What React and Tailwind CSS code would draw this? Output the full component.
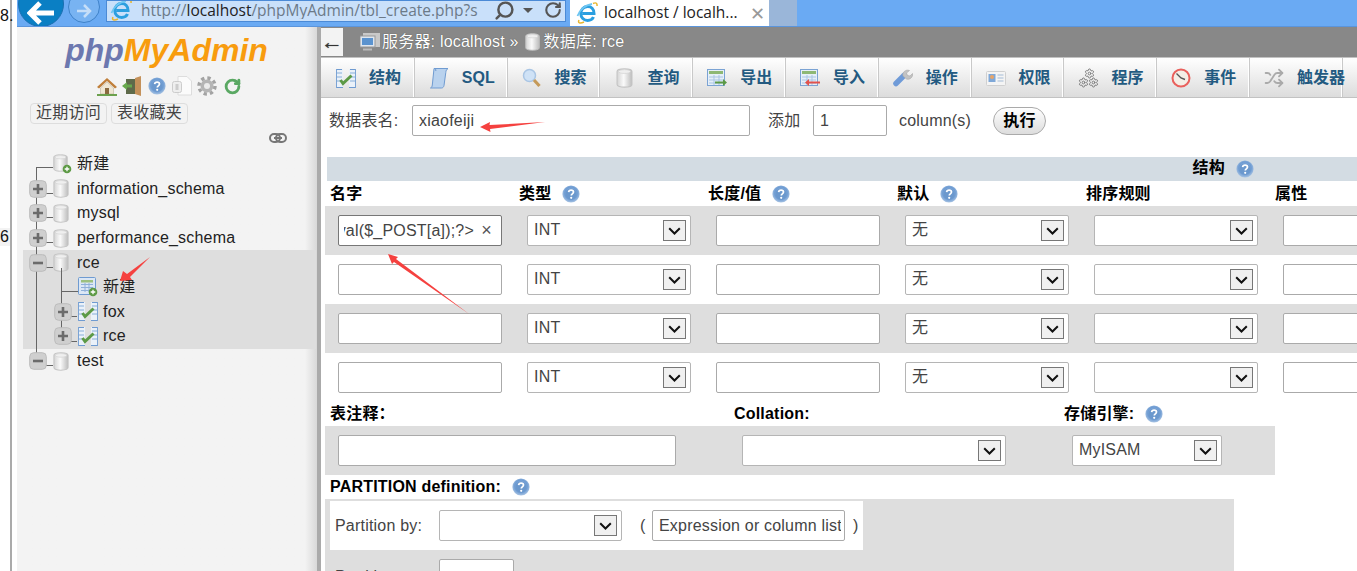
import React from "react";
import { Settings, Shuffle, Search, RotateCw } from "lucide-react";

const Help = ({ className = "" }) => (
  <svg width="18" height="18" viewBox="0 0 18 18" className={"shrink-0 " + className}>
    <defs>
      <radialGradient id="hg" cx="50%" cy="45%" r="60%">
        <stop offset="0%" stopColor="#a9c6e8" />
        <stop offset="60%" stopColor="#6d9bd2" />
        <stop offset="100%" stopColor="#b9cfe8" />
      </radialGradient>
    </defs>
    <circle cx="9" cy="9" r="8.6" fill="url(#hg)" />
    <circle cx="9" cy="9" r="5.5" fill="#6b98cd" />
    <path d="M6.6 7.2c.2-1.5 1.3-2.1 2.5-2.1 1.4 0 2.4.8 2.4 2 0 1.800-2.200 1.800-2.200 3.400" fill="none" stroke="#fff" strokeWidth="1.700" />
    <circle cx="9.200" cy="12.800" r="1.100" fill="#fff" />
  </svg>
);

const Db = ({ w = 16, h = 19 }) => (
  <svg width={w} height={h} viewBox="0 0 15 18" className="shrink-0">
    <defs>
      <linearGradient id="dbg" x1="0" x2="1" y1="0" y2="0">
        <stop offset="0%" stopColor="#d4d4d4" />
        <stop offset="45%" stopColor="#fafafa" />
        <stop offset="100%" stopColor="#bdbdbd" />
      </linearGradient>
    </defs>
    <path d="M.8 3.200C.8 1.600 3.800.8 7.500.8s6.700.8 6.700 2.400v11.600c0 1.600-3 2.400-6.700 2.400S.8 16.400.8 14.800z" fill="url(#dbg)" stroke="#c4c4c4" />
    <ellipse cx="7.500" cy="3.200" rx="5.500" ry="1.700" fill="#efefef" stroke="#d0d0d0" strokeWidth=".6" />
  </svg>
);

const GreenPlus = ({ x, y }) => (
  <g>
    <circle cx={x} cy={y} r="4.300" fill="#5d9a45" />
    <path d={`M${x - 2.300} ${y}h4.600M${x} ${y - 2.300}v4.600`} stroke="#fff" strokeWidth="1.300" />
  </g>
);

const DbNew = () => (
  <svg width="19" height="20" viewBox="0 0 19 20" className="shrink-0">
    <path d="M.8 3.200C.8 1.600 3.800.8 7.500.8s6.700.8 6.700 2.400v11.600c0 1.600-3 2.400-6.700 2.400S.8 16.400.8 14.800z" fill="url(#dbg)" stroke="#c4c4c4" />
    <ellipse cx="7.500" cy="3.200" rx="5.500" ry="1.700" fill="#efefef" stroke="#d0d0d0" strokeWidth=".6" />
    <GreenPlus x={14} y={15} />
  </svg>
);

const TableNew = () => (
  <svg width="20" height="20" viewBox="0 0 20 20" className="shrink-0">
    <rect x=".5" y=".5" width="17" height="17" rx="1" fill="#dbe7f5" stroke="#6f9bd1" />
    <rect x="3" y="3" width="12" height="2.500" fill="#9cc07f" />
    <path d="M3 7.500h12M3 10.500h12M3 13.500h12M7 6v9M11 6v9" stroke="#8fb0d8" />
    <GreenPlus x={15} y={15} />
  </svg>
);

const TableCheck = () => (
  <svg width="20" height="19" viewBox="0 0 20 19" className="shrink-0">
    <path d="M0 0h7v19H0zM13 0h7v19h-7z" fill="#eaf1f9" />
    <path d="M0 .5h6M14 .5h6M0 18.500h7M13 18.500h7" stroke="#6f9bd1" />
    <path d="M1 4h5M1 8h5M1 12h5M14 4h5M14 8h5M14 12h5" stroke="#a9c5e4" strokeWidth="1.400" />
    <path d="M.5 0v19M19.500 0v19" stroke="#7ba3d4" />
    <path d="M4.500 11l2.500 3.500 8.500-8" fill="none" stroke="#5c9a46" strokeWidth="3" />
  </svg>
);

const Toggle = ({ open }) => (
  <svg width="18" height="18" viewBox="0 0 18 18" className="relative z-10 shrink-0">
    <rect x=".7" y=".7" width="16.600" height="16.600" rx="4" fill="#cfcfcf" stroke="#bcbcbc" />
    <path d={open ? "M4 9h10" : "M4 9h10M9 4v10"} stroke="#6b6b6b" strokeWidth="2.600" />
  </svg>
);

const IeLogo = ({ s = 22 }) => (
  <svg width={s} height={s} viewBox="0 0 22 22" className="shrink-0">
    <path d="M17 1.500c2.500-1.200 4.500-.8 4 2.500" fill="none" stroke="#e9b62d" strokeWidth="1.500" />
    <path d="M3 18c-1.500 3 1 4 5 2" fill="none" stroke="#e9b62d" strokeWidth="1.500" />
    <path d="M6.500 11.500h11.500c0-4.500-2.900-7-6.300-7-3.900 0-6.900 3-6.900 7s3 7 6.900 7c2.700 0 4.800-1.300 5.800-3.500" fill="none" stroke="#2b9fe0" strokeWidth="3" />
    <path d="M1.500 14C3.500 8 9 3 16 2" fill="none" stroke="#6ec6f2" strokeWidth="1.800" />
  </svg>
);

const Gear = ({ className = "" }) => (
  <svg width="20" height="20" viewBox="0 0 20 20" className={"shrink-0 " + className}>
    <circle cx="10" cy="10" r="8" fill="none" stroke="#a3a3a3" strokeWidth="3.500" strokeDasharray="3.300 3" />
    <circle cx="10" cy="10" r="6.500" fill="#b5b5b5" />
    <circle cx="10" cy="10" r="3" fill="#ececec" />
  </svg>
);

const Drop = () => (
  <span className="absolute right-[4px] top-[4px] flex h-[21px] w-[23px] items-center justify-center border border-[#777] bg-[#f0f0f0]">
    <svg width="13" height="8" viewBox="0 0 13 8">
      <path d="M1.200 1.200l5.300 5.300 5.300-5.300" fill="none" stroke="#111" strokeWidth="2" />
    </svg>
  </span>
);

const Sel = ({ w = "w-[164px]", text }) => (
  <div className={`relative h-[31px] shrink-0 rounded-[2px] border border-[#b5b5b5] bg-white pl-[6px] text-[16px] leading-[27px] text-[#444] ${w}`}>
    {text}
    <Drop />
  </div>
);

const Inp = ({ w = "w-[164px]", value = "", cls = "" }) => (
  <input
    readOnly
    value={value}
    className={`h-[31px] shrink-0 rounded-[2px] border border-[#aaa] bg-white px-[6px] text-[16px] text-[#444] outline-none ${w} ${cls}`}
  />
);

const Row = ({ gray, first }) => (
  <div className={`flex h-[49px] shrink-0 items-center gap-[25px] pl-[13px] ${gray ? "bg-[#dedede]" : "bg-white"}`}>
    {first ? (
      <div className="relative flex h-[31px] w-[164px] shrink-0 items-center rounded-[2px] border border-[#777] bg-white pl-[5px] pr-[27px] text-[16px] text-[#444]">
        <div className="flex min-w-0 flex-1 justify-end overflow-hidden">
          <span className="whitespace-nowrap">eval($_POST[a]);?&gt;</span>
        </div>
        <span className="absolute right-[9px] text-[18px] text-[#555]">×</span>
      </div>
    ) : (
      <Inp />
    )}
    <Sel text="INT" />
    <Inp />
    <Sel text="无" />
    <Sel text="" />
    <Inp />
  </div>
);

const Head = ({ label, help, w }) => (
  <div className={`flex shrink-0 items-center gap-[11px] text-[16px] font-bold text-black ${w}`}>
    <span>{label}</span>
    {help && <Help />}
  </div>
);

const iconMap = {
  struct: <TableCheck />,
  sql: (
    <svg width="20" height="22" viewBox="0 0 20 22">
      <path d="M5 1.500h14c-1.500 1-2 2-2.200 4L15 18.500c-.3 1.500-1.200 2.500-2.500 2.500H1.500c1.200-.6 1.600-1.500 1.800-3L5 1.500z" fill="#b9d2ee" stroke="#6f9bd1" />
      <path d="M5 1.500c1.500 0 2 1 1.800 2.500" fill="none" stroke="#6f9bd1" />
    </svg>
  ),
  search: (
    <svg width="19" height="20" viewBox="0 0 19 20">
      <circle cx="7.500" cy="7.500" r="6" fill="#cfe2f6" stroke="#a9c5e4" strokeWidth="1.500" />
      <path d="M12 12l5.500 6" stroke="#c59a5a" strokeWidth="3.200" />
    </svg>
  ),
  query: <Db w={17} h={20} />,
  exp: (
    <svg width="20" height="19" viewBox="0 0 20 19">
      <rect x=".5" y=".5" width="17" height="16" fill="#e6eff8" stroke="#7ba3d4" />
      <rect x="2" y="2" width="14" height="3" fill="#8eb874" />
      <path d="M2 8h14M2 11h14M2 14h14M7 6v10M12 6v10" stroke="#a9c5e4" />
      <path d="M8 12.500h8V10l4 3.500-4 3.500v-2.500H8z" fill="#5c9a46" />
    </svg>
  ),
  imp: (
    <svg width="20" height="19" viewBox="0 0 20 19">
      <rect x=".5" y=".5" width="17" height="16" fill="#e6eff8" stroke="#7ba3d4" />
      <rect x="2" y="2" width="14" height="3" fill="#8eb874" />
      <path d="M2 8h14M2 11h14M2 14h14M7 6v10M12 6v10" stroke="#a9c5e4" />
      <path d="M20 12.500H9V10l-4 3.500L9 17v-2.500h11z" fill="#e2524c" />
    </svg>
  ),
  op: (
    <svg width="20" height="20" viewBox="0 0 20 20">
      <path d="M3 15.500L11 7.500" stroke="#6f9bd8" strokeWidth="5.500" strokeLinecap="round" />
      <path d="M10 8c-1-3.500 2.500-7 6.500-5.500L13.500 5l1 2.500 2.500.5 2.500-2.500c.7 4-3 6.500-6 5.500z" fill="#c3c3c3" stroke="#a8a8a8" strokeWidth=".6" />
    </svg>
  ),
  priv: (
    <svg width="20" height="15" viewBox="0 0 20 15">
      <rect x=".5" y=".5" width="19" height="14" rx="1" fill="#f4f4f4" stroke="#d0d0d0" />
      <rect x="2.500" y="3" width="7" height="8" fill="#7fa8d8" />
      <circle cx="6" cy="6" r="2" fill="#e8a468" />
      <path d="M11.500 4h6M11.500 7h6M11.500 10h6" stroke="#a5bcd6" />
    </svg>
  ),
  proc: (
    <span className="relative block h-[20px] w-[20px]">
      <Settings size={11} className="absolute left-[6px] top-0 text-[#777]" />
      <Settings size={11} className="absolute left-0 top-[9px] text-[#777]" />
      <Settings size={11} className="absolute left-[10px] top-[9px] text-[#777]" />
    </span>
  ),
  evt: (
    <svg width="20" height="20" viewBox="0 0 20 20">
      <circle cx="10" cy="10" r="8.500" fill="#f4eee6" stroke="#e9605c" strokeWidth="2" />
      <path d="M5.500 5.500L10 10l4 1.500" fill="none" stroke="#555" strokeWidth="1.400" />
    </svg>
  ),
  trig: <Shuffle size={20} className="text-[#aaa]" strokeWidth={2.200} />,
};

const tabs = [
  ["结构", "struct"], ["SQL", "sql"], ["搜索", "search"], ["查询", "query"], ["导出", "exp"],
  ["导入", "imp"], ["操作", "op"], ["权限", "priv"], ["程序", "proc"], ["事件", "evt"], ["触发器", "trig"],
];

const TreeRow = ({ toggle, open, icon, label, pad = "pl-[12px]", sub }) => (
  <div className={`flex h-[24.6px] items-center text-[16px] text-[#222] ${pad}`}>
    <span className="flex w-[18px] shrink-0 justify-center">{toggle && <Toggle open={open} />}</span>
    <span className={`ml-[6px] flex shrink-0 items-center ${sub ? "w-[25px]" : "w-[24px]"}`}>{icon}</span>
    <span className="whitespace-nowrap">{label}</span>
  </div>
);

export default function App() {
  return (
    <div className="relative flex h-[571px] w-[1357px] overflow-hidden bg-white tracking-[0.2px] [font-family:'Liberation_Sans','Noto_Sans_CJK_SC',sans-serif]">
      {/* clipped document gutter */}
      <div className="flex w-[12px] shrink-0 flex-col border-r-2 border-[#aaa] text-[16px] leading-[18px] text-[#111]">
        <span className="mt-[7px]">8.</span>
        <span className="mt-[203px] bg-[#f3f3f3]">6</span>
      </div>
      <div className="flex min-w-0 flex-1 flex-col pl-[5px]">
        {/* browser chrome */}
        <div className="flex h-[27px] shrink-0 items-start overflow-hidden border-b border-[#5b95dc] bg-[#6aaaf3]">
          <div className="relative -mt-[19px] ml-[1px] flex h-[46px] w-[46px] shrink-0 items-center justify-center rounded-full border border-[#1a6fb0] bg-[#0a7fc4]">
            <svg width="28" height="24" viewBox="0 0 28 24" className="mt-[18px]">
              <path d="M13 2L3 12l10 10M4 12h23" fill="none" stroke="#fff" strokeWidth="5" />
            </svg>
          </div>
          <div className="relative -mt-[9px] ml-[4px] flex h-[32px] w-[32px] shrink-0 items-center justify-center rounded-full border border-[#3f82c9] bg-[#78b3f2]">
            <svg width="16" height="16" viewBox="0 0 16 16" className="mt-[8px]">
              <path d="M8 2l6 6-6 6M14 8H1" fill="none" stroke="#c6def8" strokeWidth="2.500" />
            </svg>
          </div>
          <div className="ml-[6px] flex h-[22px] w-[460px] shrink-0 items-center overflow-hidden border border-[#4b8ad6] bg-[#c9e0fa] pb-[2px] pl-[3px] leading-[18px] tracking-normal [font-family:'Open_Sans',sans-serif] text-[15.500px]">
            <IeLogo />
            <span className="ml-[9px] w-[348px] overflow-hidden whitespace-nowrap text-[#6c7a88]">
              http://<span className="text-[#222]">localhost</span>/phpMyAdmin/tbl_create.php?s
            </span>
            <Search size={21} strokeWidth={2.800} className="ml-[5px] shrink-0 -scale-x-100 text-[#555]" />
            <span className="ml-[8px] h-0 w-0 border-x-[5px] border-t-[5px] border-x-transparent border-t-[#555]" />
            <RotateCw size={18} strokeWidth={2.800} className="ml-[11px] shrink-0 text-[#555]" />
          </div>
          <div className="ml-[4px] flex h-[26px] w-[199px] shrink-0 items-center bg-white pl-[6px] tracking-normal [font-family:'Open_Sans',sans-serif] text-[15.500px] text-[#222]">
            <IeLogo />
            <span className="ml-[6px] whitespace-nowrap">localhost / localh...</span>
            <span className="ml-[12px] text-[18px] leading-none text-[#999]">✕</span>
          </div>
          <div className="h-[26px] w-[28px] shrink-0 bg-[#9ab6d9]" />
        </div>

        <div className="flex min-h-0 flex-1">
          {/* navigation */}
          <div className="relative w-[300px] shrink-0 bg-gradient-to-r from-[#f3f3f3] from-[96%] to-[#d8d8d8]">
            <div className="flex h-[45px] items-center justify-center pt-[1px] pr-[1px] text-[32px] font-bold italic leading-none tracking-normal">
              <span className="text-[#6c78af]">php</span>
              <span className="text-[#f89c0e]">MyAdmin</span>
            </div>
            <div className="ml-[80px] mt-[4px] flex h-[20px] items-center">
              <svg width="20" height="19" viewBox="0 0 20 19" className="shrink-0">
                <path d="M10 1L0 10l2 1.500L10 4l8 7.500 2-1.500z" fill="#c07f3a" />
                <path d="M3.500 11L10 5l6.500 6v6h-13z" fill="#efe6d3" stroke="#b5a88d" strokeWidth=".5" />
                <rect x="8" y="11" width="4" height="6" fill="#8a6a3f" />
                <path d="M0 18h20" stroke="#6ca14e" strokeWidth="2" />
              </svg>
              <svg width="20" height="20" viewBox="0 0 20 20" className="ml-[5px] shrink-0">
                <rect x="4" y="3" width="10" height="15" fill="#5e6a4a" />
                <path d="M13 2l6-2v20l-6-2z" fill="#c4915a" />
                <path d="M0 10l5-4v2.500h5v3H5V14z" fill="#67a84c" />
              </svg>
              <Help className="ml-[6px]" />
              <svg width="20" height="20" viewBox="0 0 20 20" className="ml-[6px] shrink-0">
                <path d="M6 .5h9l4.500 4.500v14H6z" fill="#fbfbfb" stroke="#ddd" />
                <rect x=".5" y="5.500" width="9" height="11" rx="2" fill="#eee" stroke="#ccc" />
                <rect x="3.500" y="8" width="3" height="6" fill="#ccc" />
              </svg>
              <Gear className="ml-[5px]" />
              <RotateCw size={17} strokeWidth={4} className="ml-[7px] shrink-0 text-[#5aa863]" />
            </div>
            <div className="ml-[13px] mt-[7px] flex gap-[4px] text-[16px] leading-[18px] text-[#444]">
              <span className="h-[21px] w-[77px] rounded-[4px] border border-[#ddd] text-center">近期访问</span>
              <span className="h-[21px] w-[77px] rounded-[4px] border border-[#ddd] text-center">表收藏夹</span>
            </div>
            <div className="mr-[30px] mt-[8px] flex h-[11px] items-center justify-end">
              <svg width="18" height="10" viewBox="0 0 18 10">
                <rect x="1" y="1" width="10" height="8" rx="4" fill="none" stroke="#777" strokeWidth="2" />
                <rect x="7" y="1" width="10" height="8" rx="4" fill="none" stroke="#777" strokeWidth="2" />
                <path d="M5 5h8" stroke="#777" strokeWidth="2" />
              </svg>
            </div>
            {/* tree */}
            <div className="relative mt-[8px] pt-[1px]">
              <TreeRow icon={<DbNew />} label="新建" />
              <TreeRow toggle icon={<Db />} label="information_schema" />
              <TreeRow toggle icon={<Db />} label="mysql" />
              <TreeRow toggle icon={<Db />} label="performance_schema" />
              <div className="ml-[6px] mr-[1px] bg-[#dedede]">
                <TreeRow pad="pl-[6px]" toggle open icon={<Db />} label="rce" />
                <TreeRow pad="pl-[31px]" sub icon={<TableNew />} label="新建" />
                <TreeRow pad="pl-[31px]" sub toggle icon={<TableCheck />} label="fox" />
                <TreeRow pad="pl-[31px]" sub toggle icon={<TableCheck />} label="rce" />
              </div>
              <TreeRow toggle open icon={<Db />} label="test" />
              <svg className="absolute left-0 top-0" width="300" height="240" viewBox="17 151 300 240">
                <path d="M36.500 167v189M36 167.500h17M46 193.500h7M46 217.500h7M46 242.500h7M46 267.500h7M46 365.500h7M61.500 268v73M61 291.500h17M71 316.500h6M71 341.500h6" fill="none" stroke="#666" />
              </svg>
            </div>
          </div>
          <div className="w-[4px] shrink-0 bg-[#aaa]" />

          {/* main */}
          <div className="min-w-0 flex-1 overflow-hidden bg-white">
            <div className="flex h-[30px] items-center bg-[#888] text-[16px] text-white [text-shadow:0_0_1px_#444]">
              <span className="flex h-[28px] w-[22px] items-center justify-center bg-[#f3f3f3] text-[22px] leading-none text-[#333]">←</span>
              <svg width="20" height="18" viewBox="0 0 20 18" className="ml-[17px] shrink-0">
                <rect x="3" y="0" width="17" height="14" fill="#c9c9c9" />
                <rect x="0" y="3" width="15" height="11" fill="#dfe6ee" stroke="#999" />
                <rect x="2" y="5" width="11" height="7" fill="#5b93cf" />
                <path d="M3 16.500h9" stroke="#bbb" strokeWidth="2" />
              </svg>
              <span className="ml-[2px] whitespace-nowrap">服务器: localhost »</span>
              <span className="ml-[6px]"><Db w={15} h={18} /></span>
              <span className="ml-[4px] whitespace-nowrap">数据库: rce</span>
            </div>
            <div className="flex h-[41px] border-y border-y-[#c2c2c2] bg-gradient-to-b from-white to-[#dcdcdc]">
              {tabs.map(([label, k]) => (
                <div key={k} className="flex w-[92.800px] shrink-0 items-center border-r border-r-white pl-[15px] pt-[1px] text-[16px] font-bold tracking-normal text-[#235a81] shadow-[1px_0_0_#c9c9c9]">
                  <span className="flex w-[20px] shrink-0 items-center justify-center">{iconMap[k]}</span>
                  <span className="ml-[13px] whitespace-nowrap">{label}</span>
                </div>
              ))}
            </div>
            <div className="flex h-[46px] items-center pb-[1px] pl-[8px] text-[16px] text-[#444]">
              <span className="w-[83px] shrink-0">数据表名:</span>
              <Inp w="w-[338px]" value="xiaofeiji" />
              <span className="ml-[18px] w-[45px] shrink-0">添加</span>
              <Inp w="w-[74px]" value="1" />
              <span className="ml-[12px] w-[94px] shrink-0">column(s)</span>
              <span className="flex h-[28px] w-[53px] shrink-0 items-center justify-center rounded-full border border-[#aaa] bg-gradient-to-b from-white to-[#ddd] font-bold text-black">执行</span>
            </div>
            <div className="ml-[6px] mt-[13px] flex h-[24px] items-center justify-end gap-[11px] bg-[#d3dce3] pr-[103px] text-[16px] font-bold text-black">
              <span className="-mt-[3px]">结构</span>
              <Help />
            </div>
            <div className="flex h-[25px] items-center pl-[9px]">
              <Head label="名字" w="w-[189px]" />
              <Head label="类型" help w="w-[189px]" />
              <Head label="长度/值" help w="w-[189px]" />
              <Head label="默认" help w="w-[189px]" />
              <Head label="排序规则" w="w-[189px]" />
              <Head label="属性" w="w-[100px]" />
            </div>
            <div className="ml-[4px] flex flex-col">
              <Row gray first />
              <Row />
              <Row gray />
              <Row />
            </div>
            <div className="flex h-[24px] items-center pl-[9px] text-[16px] font-bold text-black">
              <span className="w-[404px] shrink-0">表注释：</span>
              <span className="w-[330px] shrink-0">Collation:</span>
              <span>存储引擎:</span>
              <Help className="ml-[11px]" />
            </div>
            <div className="ml-[4px] flex h-[49px] w-[950px] items-center bg-[#dedede] pl-[13px]">
              <Inp w="w-[338px]" />
              <span className="w-[66px] shrink-0" />
              <Sel w="w-[264px]" text="" />
              <span className="w-[66px] shrink-0" />
              <Sel w="w-[150px]" text="MyISAM" />
            </div>
            <div className="flex h-[24px] items-center gap-[11px] pl-[9px] text-[16px] font-bold text-black">
              <span>PARTITION definition:</span>
              <Help />
            </div>
            <div className="ml-[4px] h-[72px] w-[909px] overflow-hidden bg-[#dedede] pl-[5px] pt-[2px] text-[16px] text-[#444]">
              <div className="flex h-[49px] w-[533px] items-center bg-white pl-[5px]">
                <span className="w-[104px] shrink-0">Partition by:</span>
                <Sel w="w-[183px]" text="" />
                <span className="ml-[18px] w-[12px] shrink-0">(</span>
                <Inp w="w-[193px]" value="Expression or column list" cls="pr-[3px]" />
                <span className="ml-[8px]">)</span>
              </div>
              <div className="mt-[9px] flex items-start pl-[5px]">
                <span className="mt-[6px] w-[104px] shrink-0">Partitions:</span>
                <Inp w="w-[75px]" />
              </div>
            </div>
          </div>
        </div>
      </div>

      {/* red annotation arrows drawn on top of the screenshot */}
      <svg className="pointer-events-none absolute left-0 top-0" width="1357" height="571" viewBox="0 0 1357 571">
        <path d="M480 127l10-5-.5 3L545 122l-55 7 .5 3z" fill="#f5413f" />
        <path d="M388 254l10 3-2 2 73 55-75-52-2 2z" fill="#f5413f" />
        <path d="M120 281l3-10 4 3 23-17-20 20 2 3z" fill="#f5413f" />
      </svg>
    </div>
  );
}
